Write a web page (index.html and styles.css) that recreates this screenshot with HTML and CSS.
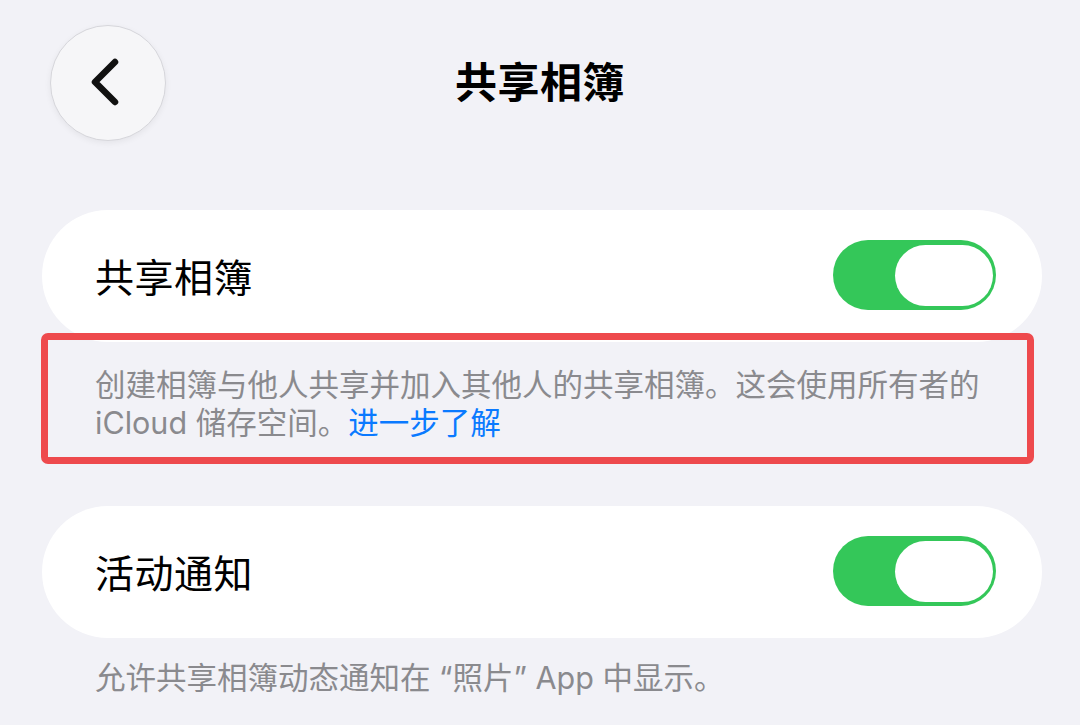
FILE: index.html
```html
<!DOCTYPE html>
<html lang="zh-CN">
<head>
<meta charset="utf-8">
<title>共享相簿</title>
<link rel="stylesheet" href="styles.css">
</head>
<body>
<div class="page">
  <header class="nav">
    <button class="back" aria-label="返回">
      <svg width="40" height="56" viewBox="0 0 40 56" aria-hidden="true">
        <path d="M30 7 L10 27 L30 47" fill="none" stroke="#111" stroke-width="6.5" stroke-linecap="round" stroke-linejoin="round"/>
      </svg>
    </button>
    <h1 class="title">共享相簿</h1>
    <div class="nav-spacer"></div>
  </header>

  <section class="group first">
    <div class="card">
      <span class="label">共享相簿</span>
      <span class="toggle on"><span class="knob"></span></span>
    </div>
    <p class="note highlight">创建相簿与他人共享并加入其他人的共享相簿。这会使用所有者的<br>iCloud 储存空间。<a class="link">进一步了解</a></p>
  </section>

  <section class="group second">
    <div class="card">
      <span class="label">活动通知</span>
      <span class="toggle on"><span class="knob"></span></span>
    </div>
    <p class="note footer">允许共享相簿动态通知在 “照片” App 中显示。</p>
  </section>
</div>
</body>
</html>
```

FILE: styles.css
```css
html, body {
  margin: 0;
  padding: 0;
  background: #f2f2f7;
}
body {
  width: 1080px;
  height: 725px;
  overflow: hidden;
  font-family: Inter, "Noto Sans CJK SC", sans-serif;
  color: #000;
}
.page {
  display: flex;
  flex-direction: column;
}
.nav {
  display: grid;
  grid-template-columns: 1fr auto 1fr;
  align-items: center;
  padding: 25px 0 0 50px;
  height: 115px;
}
.back {
  width: 116px;
  height: 116px;
  border-radius: 50%;
  border: 1.5px solid #d6d6db;
  background: #f6f6f8;
  box-shadow: 0 2px 6px rgba(0,0,0,0.06);
  display: flex;
  align-items: center;
  justify-content: center;
  padding: 0 6px 0 0;
  box-sizing: border-box;
}
.back svg { display: block; }
.title {
  margin: 0 0 7px -50px;
  font-size: 42px;
  font-weight: 700;
  line-height: 1;
  font-family: "Noto Sans CJK SC", sans-serif;
  letter-spacing: 0.5px;
}
.group.first { margin-top: 70px; }
.group.second { margin-top: 42px; }
.card {
  margin: 0 38px 0 42px;
  height: 132px;
  background: #fff;
  border-radius: 66px;
  display: flex;
  align-items: center;
  justify-content: space-between;
  padding: 0 46px 2px 53px;
  box-sizing: border-box;
}
.label {
  font-family: "Noto Sans CJK SC", sans-serif;
  font-size: 39px;
  letter-spacing: 0.5px;
  line-height: 1;
}
.toggle {
  width: 163px;
  height: 70px;
  border-radius: 35px;
  background: #34c759;
  display: flex;
  align-items: center;
  justify-content: flex-end;
  padding: 0 3px;
  box-sizing: border-box;
}
.knob {
  width: 98px;
  height: 61px;
  border-radius: 31px;
  background: #fff;
}
.note {
  margin: 0;
  color: #8a8a8e;
  font-size: 30.5px;
  line-height: 38px;
}
.highlight {
  position: relative;
  z-index: 1;
  margin: -9px 46px 0 41px;
  border: 7px solid #ee4a4d;
  border-radius: 7px;
  padding: 26px 0 15px 47px;
}
.link { color: #0a7aff; }
.footer {
  margin-top: 21px;
  padding-left: 95px;
}
```
